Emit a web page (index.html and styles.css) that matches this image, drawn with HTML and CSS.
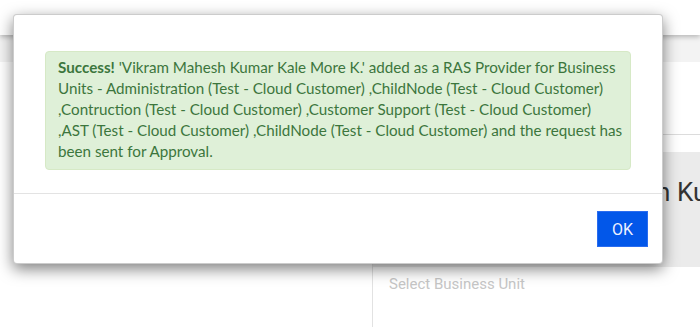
FILE: index.html
```html
<!DOCTYPE html>
<html>
<head>
  <title>RAS Provider - Business Units</title>
  <link rel="stylesheet" href="styles.css">
</head>
<body>
  <div class="topbar"></div>
  <div class="subbar"></div>

  <div class="page">
    <div class="side"></div>
    <div class="main">
      <div class="main-top"></div>
      <div class="profile">
        <h1 class="profile-name">Vikram Mahesh Kumar Kale More K.</h1>
      </div>
      <div class="select-label">Select Business Unit</div>
    </div>
  </div>

  <!-- success dialog -->
  <div class="modal">
    <div class="modal-body">
      <div class="alert alert-success">
        <strong>Success!</strong> 'Vikram Mahesh Kumar Kale More K.' added as a RAS Provider for Business Units - Administration (Test - Cloud Customer) ,ChildNode (Test - Cloud Customer) ,Contruction (Test - Cloud Customer) ,Customer Support (Test - Cloud Customer) ,AST (Test - Cloud Customer) ,ChildNode (Test - Cloud Customer) and the request has been sent for Approval.
      </div>
    </div>
    <div class="modal-footer">
      <button class="btn-ok">OK</button>
    </div>
  </div>
</body>
</html>
```

FILE: styles.css
```css
body {
  margin: 0;
  background-color: #fff;
  font-family: Roboto, "Liberation Sans", sans-serif;
  overflow: hidden;
}

.topbar {
  position: relative;
  z-index: 2;
  height: 35px;
  background-color: #fff;
  box-shadow: 0 2px 5px rgba(0, 0, 0, 0.25);
}

.subbar {
  height: 27px;
  background-color: #f3f3f3;
}

.page {
  display: flex;
  height: 265px;
}

.side {
  flex: 0 0 372px;
  background-color: #fff;
}

.main {
  flex: 1;
  min-width: 0;
  border-left: 1px solid #e2e2e2;
}

.main-top {
  height: 72px;
  border-bottom: 1px solid #dcdcdc;
  margin-bottom: 17px;
}

.profile {
  height: 115px;
  padding: 22px 0 0 117px;
  box-sizing: border-box;
  background-color: #ebebeb;
  white-space: nowrap;
  overflow: hidden;
}

.profile-name {
  margin: 0;
  font-size: 26px;
  line-height: 36px;
  font-weight: 400;
  color: #333;
}

.select-label {
  padding: 8px 0 0 16px;
  font-size: 15px;
  color: #c6c6c6;
}

.modal {
  position: absolute;
  top: 14px;
  left: 13px;
  width: 650px;
  box-sizing: border-box;
  background-color: #fff;
  border: 1px solid rgba(0, 0, 0, 0.2);
  border-radius: 4px;
  box-shadow: 0 5px 15px rgba(0, 0, 0, 0.5);
  z-index: 10;
}

.modal-body {
  padding: 36px 31px 3px;
}

.alert {
  margin-bottom: 20px;
  padding: 5px 6px 7px 12px;
  border: 1px solid #d6e9c6;
  border-radius: 4px;
  font-family: Lato, "Open Sans", sans-serif;
  font-size: 15.2px;
  line-height: 21px;
}

.alert-success {
  color: #3c763d;
  background-color: #dff0d8;
}

.modal-footer {
  display: flex;
  justify-content: flex-end;
  padding: 17px 14px 16px;
  border-top: 1px solid #e3e3e3;
}

.btn-ok {
  width: 51px;
  height: 36px;
  padding: 0;
  border: 1px solid #2a6cef;
  background-color: #0257e9;
  color: #eef1ff;
  font-family: Roboto, "Liberation Sans", sans-serif;
  font-size: 16px;
  cursor: pointer;
}
```
